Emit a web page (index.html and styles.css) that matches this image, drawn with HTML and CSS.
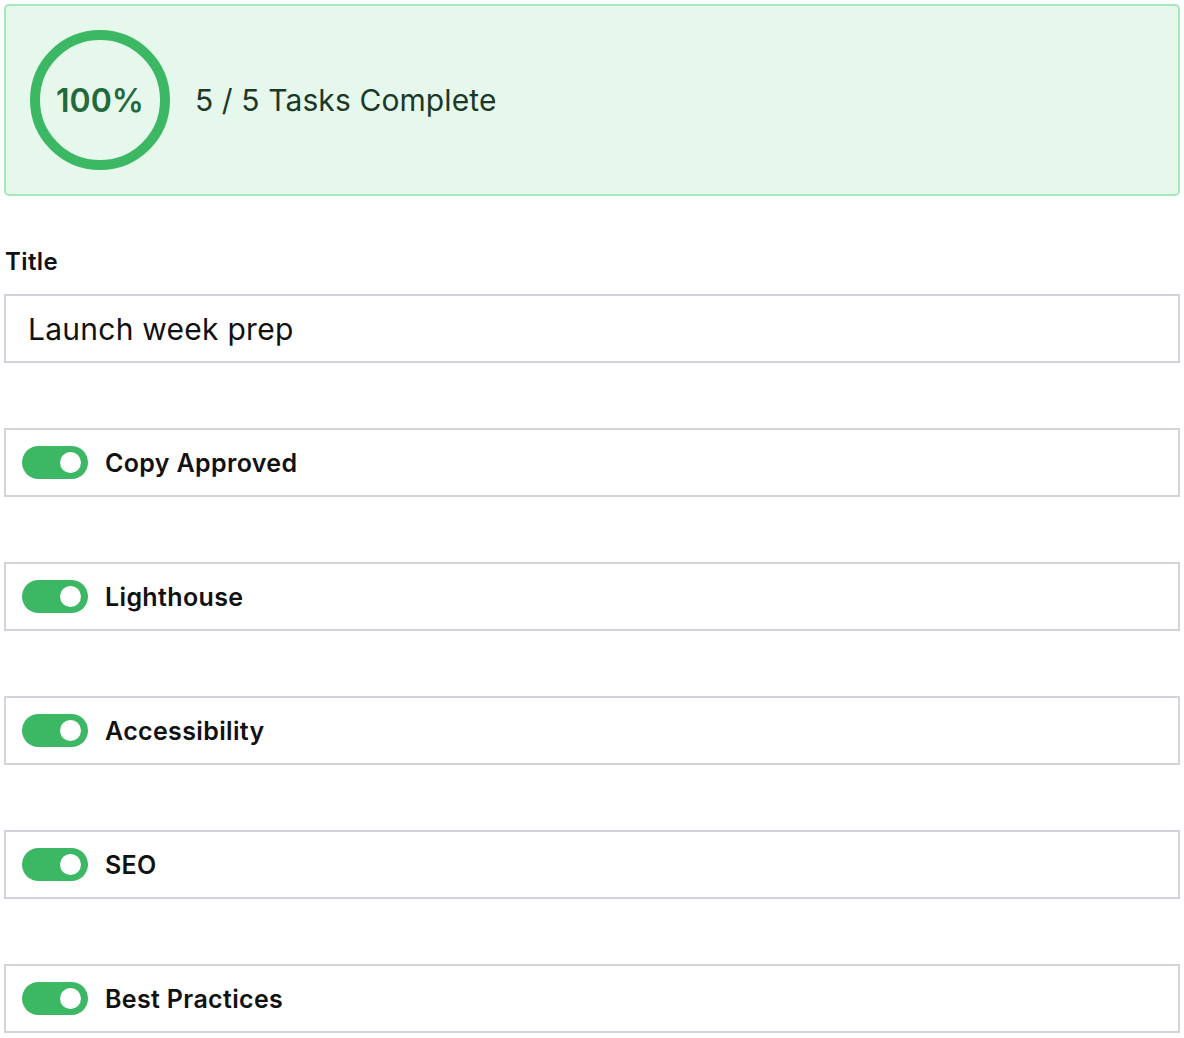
FILE: index.html
```html
<!DOCTYPE html>
<html lang="en">
<head>
<meta charset="utf-8">
<title>Checklist</title>
<link rel="stylesheet" href="styles.css">
</head>
<body>
<div class="page">
  <section class="progress">
    <div class="ring">
      <svg width="140" height="140" viewBox="0 0 140 140">
        <circle cx="70" cy="70" r="65" fill="none" stroke="#3cb764" stroke-width="10"/>
      </svg>
      <span class="ring-text">100%</span>
    </div>
    <div class="progress-text">5 / 5 Tasks Complete</div>
  </section>

  <div class="field">
    <label class="field-label" for="title">Title</label>
    <input class="field-input" id="title" type="text" value="Launch week prep">
  </div>

  <ul class="tasks">
    <li class="task"><span class="toggle"><span class="knob"></span></span><span class="task-label">Copy Approved</span></li>
    <li class="task"><span class="toggle"><span class="knob"></span></span><span class="task-label">Lighthouse</span></li>
    <li class="task"><span class="toggle"><span class="knob"></span></span><span class="task-label">Accessibility</span></li>
    <li class="task"><span class="toggle"><span class="knob"></span></span><span class="task-label">SEO</span></li>
    <li class="task"><span class="toggle"><span class="knob"></span></span><span class="task-label">Best Practices</span></li>
  </ul>
</div>
</body>
</html>
```
FILE: styles.css
```css
* { box-sizing: border-box; }
html, body { margin: 0; padding: 0; background: #ffffff; }
body {
  font-family: Inter, "Noto Sans", "Liberation Sans", sans-serif;
  color: #111111;
}
.page {
  padding: 4px;
  width: 1184px;
}
.progress {
  display: flex;
  align-items: center;
  gap: 25px;
  background: #e6f8ec;
  border: 2px solid #a6e8be;
  border-radius: 5px;
  padding: 24px 24px;
  height: 192px;
}
.ring {
  position: relative;
  width: 140px;
  height: 140px;
  flex: none;
}
.ring svg { display: block; }
.ring-text {
  position: absolute;
  inset: 0;
  display: flex;
  align-items: center;
  justify-content: center;
  font-size: 32px;
  font-weight: 600;
  color: #24693c;
}
.progress-text {
  font-size: 30px;
  color: #1d3828;
  letter-spacing: 0.1px;
}
.field {
  margin-top: 49px;
}
.field-label {
  display: block;
  font-size: 24px;
  font-weight: 600;
  line-height: 34px;
  margin-left: 1px;
  letter-spacing: 0.4px;
}
.field-input {
  display: block;
  margin-top: 15px;
  width: 100%;
  height: 69px;
  border: 2px solid #d1d5db;
  border-radius: 0;
  padding: 0 22px;
  font-family: inherit;
  font-size: 30px;
  letter-spacing: 0.25px;
  color: #111111;
  background: #fff;
  outline: none;
}
.tasks {
  list-style: none;
  margin: 65px 0 0;
  padding: 0;
  display: flex;
  flex-direction: column;
  gap: 65px;
}
.task {
  display: flex;
  align-items: center;
  gap: 17px;
  height: 69px;
  border: 2px solid #d1d5db;
  padding: 0 16px;
}
.toggle {
  position: relative;
  display: block;
  width: 66px;
  height: 33px;
  border-radius: 17px;
  background: #3cb764;
  flex: none;
}
.knob {
  position: absolute;
  right: 7px;
  top: 6px;
  width: 21px;
  height: 21px;
  border-radius: 50%;
  background: #ffffff;
}
.task-label {
  font-size: 25px;
  font-weight: 600;
  letter-spacing: 0.35px;
  color: #111111;
}
```
